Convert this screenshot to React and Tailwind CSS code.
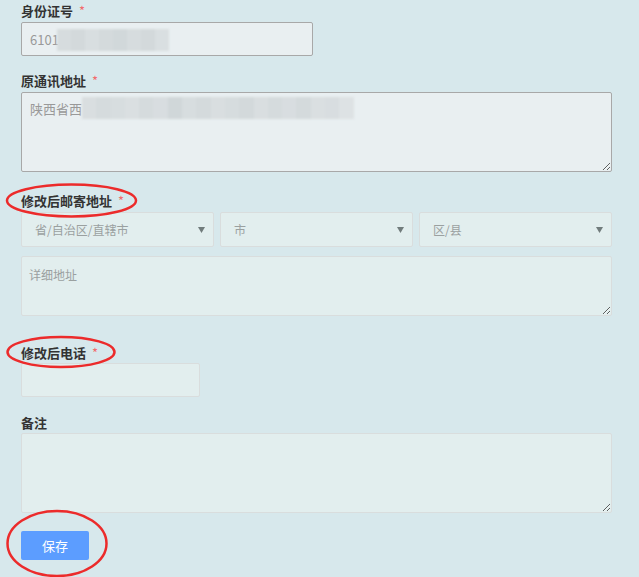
import React from "react";

const mosaicA = ["#d6dcde", "#d3d9db", "#d8dee0", "#d4dadc", "#d1d8da", "#d6dcde", "#d3d9db", "#d9dfe1"];
const mosaicB = ["#d9dee0", "#d5dbdd", "#d7dddf", "#dadfe1", "#d5dbdd", "#d8dde0", "#d0d7d9", "#d7dddf", "#d4dadc", "#d9dee0", "#d6dcde", "#d3d9db", "#d9dee0", "#d5dbdd", "#d8dde0", "#d4dadc", "#dadfe1", "#d8dde0", "#dde2e4"];

function Label({ children, required = true }) {
  return (
    <div className="text-[13px] leading-[20px] font-bold text-[#333]">
      {children}
      {required && <span className="ml-[6px] font-normal text-[#f26b6d]">*</span>}
    </div>
  );
}

function Arrow() {
  return (
    <svg width="7" height="6" viewBox="0 0 7 6" className="shrink-0">
      <path d="M0 0H7L3.5 6Z" fill="#717c7c" />
    </svg>
  );
}

function Select({ text }) {
  return (
    <div className="flex h-[35px] items-center justify-between rounded-[2px] border border-[#d9dddd] bg-[#e2eeee] pl-[13px] pr-[8px] text-[12px] text-[#9aa0a0]">
      <span>{text}</span>
      <Arrow />
    </div>
  );
}

export default function App() {
  return (
    <div className="relative min-h-[577px] w-full bg-[#d7e8ec] font-['Noto_Sans_CJK_SC','Noto_Sans',sans-serif]">
      <div className="w-[612px] pl-[21px] pt-[1px]">
        <Label>身份证号</Label>
        <div className="relative mt-[1px] w-[292px]">
          <input
            readOnly
            defaultValue="6101"
            className="block h-[34px] w-full rounded-[2px] border border-[#a8a8a8] bg-[#e9eff1] px-[8px] text-[13px] text-[#999] outline-none"
          />
          <div className="absolute left-[36px] top-[7px] flex h-[22px] blur-[1.2px]">
            {mosaicA.map((c, i) => (
              <div key={i} className="h-full w-[14px]" style={{ backgroundColor: c }} />
            ))}
          </div>
        </div>

        <div className="mt-[15px]">
          <Label>原通讯地址</Label>
          <div className="relative mt-[1px]">
            <textarea
              readOnly
              defaultValue="陕西省西"
              className="block h-[80px] w-full rounded-[2px] border border-[#a8a8a8] bg-[#e9eff1] px-[8px] py-[6px] text-[13px] leading-[20px] text-[#999] outline-none"
            />
            <div className="absolute left-[61px] top-[5px] flex h-[22px] blur-[1.2px]">
              {mosaicB.map((c, i) => (
                <div key={i} className="h-full w-[14.3px]" style={{ backgroundColor: c }} />
              ))}
            </div>
          </div>
        </div>

        <div className="mt-[19px]">
          <Label>修改后邮寄地址</Label>
          <div className="mt-[1px] grid grid-cols-3 gap-[6px]">
            <Select text="省/自治区/直辖市" />
            <Select text="市" />
            <Select text="区/县" />
          </div>
          <textarea
            placeholder="详细地址"
            className="mt-[9px] block h-[60px] w-full rounded-[2px] border border-[#d9dddd] bg-[#e2eeee] px-[7px] py-[8px] text-[12px] leading-[20px] text-[#999] outline-none placeholder:text-[#9aa0a0]"
          />
        </div>

        <div className="mt-[27px]">
          <Label>修改后电话</Label>
          <input className="block h-[34px] w-[179px] rounded-[2px] border border-[#d9dddd] bg-[#e2eeee] px-[8px] text-[13px] outline-none" />
        </div>

        <div className="mt-[16px]">
          <Label required={false}>备注</Label>
          <textarea className="block h-[80px] w-full rounded-[2px] border border-[#d9dddd] bg-[#e2eeee] px-[8px] py-[6px] text-[13px] outline-none" />
        </div>

        <button className="mt-[18px] block h-[29px] w-[68px] rounded-[2px] bg-[#5c9dff] text-[13px] text-white">
          保存
        </button>
      </div>

      <svg className="pointer-events-none absolute left-0 top-0" width="639" height="577" viewBox="0 0 639 577">
        <ellipse cx="71.5" cy="200.5" rx="64.5" ry="16" fill="none" stroke="#ec2b2b" strokeWidth="2.5" />
        <ellipse cx="61" cy="352" rx="53.5" ry="15" fill="none" stroke="#ec2b2b" strokeWidth="2.5" />
        <ellipse cx="57" cy="543.5" rx="49.5" ry="32.5" fill="none" stroke="#ec2b2b" strokeWidth="2.5" />
      </svg>
    </div>
  );
}
